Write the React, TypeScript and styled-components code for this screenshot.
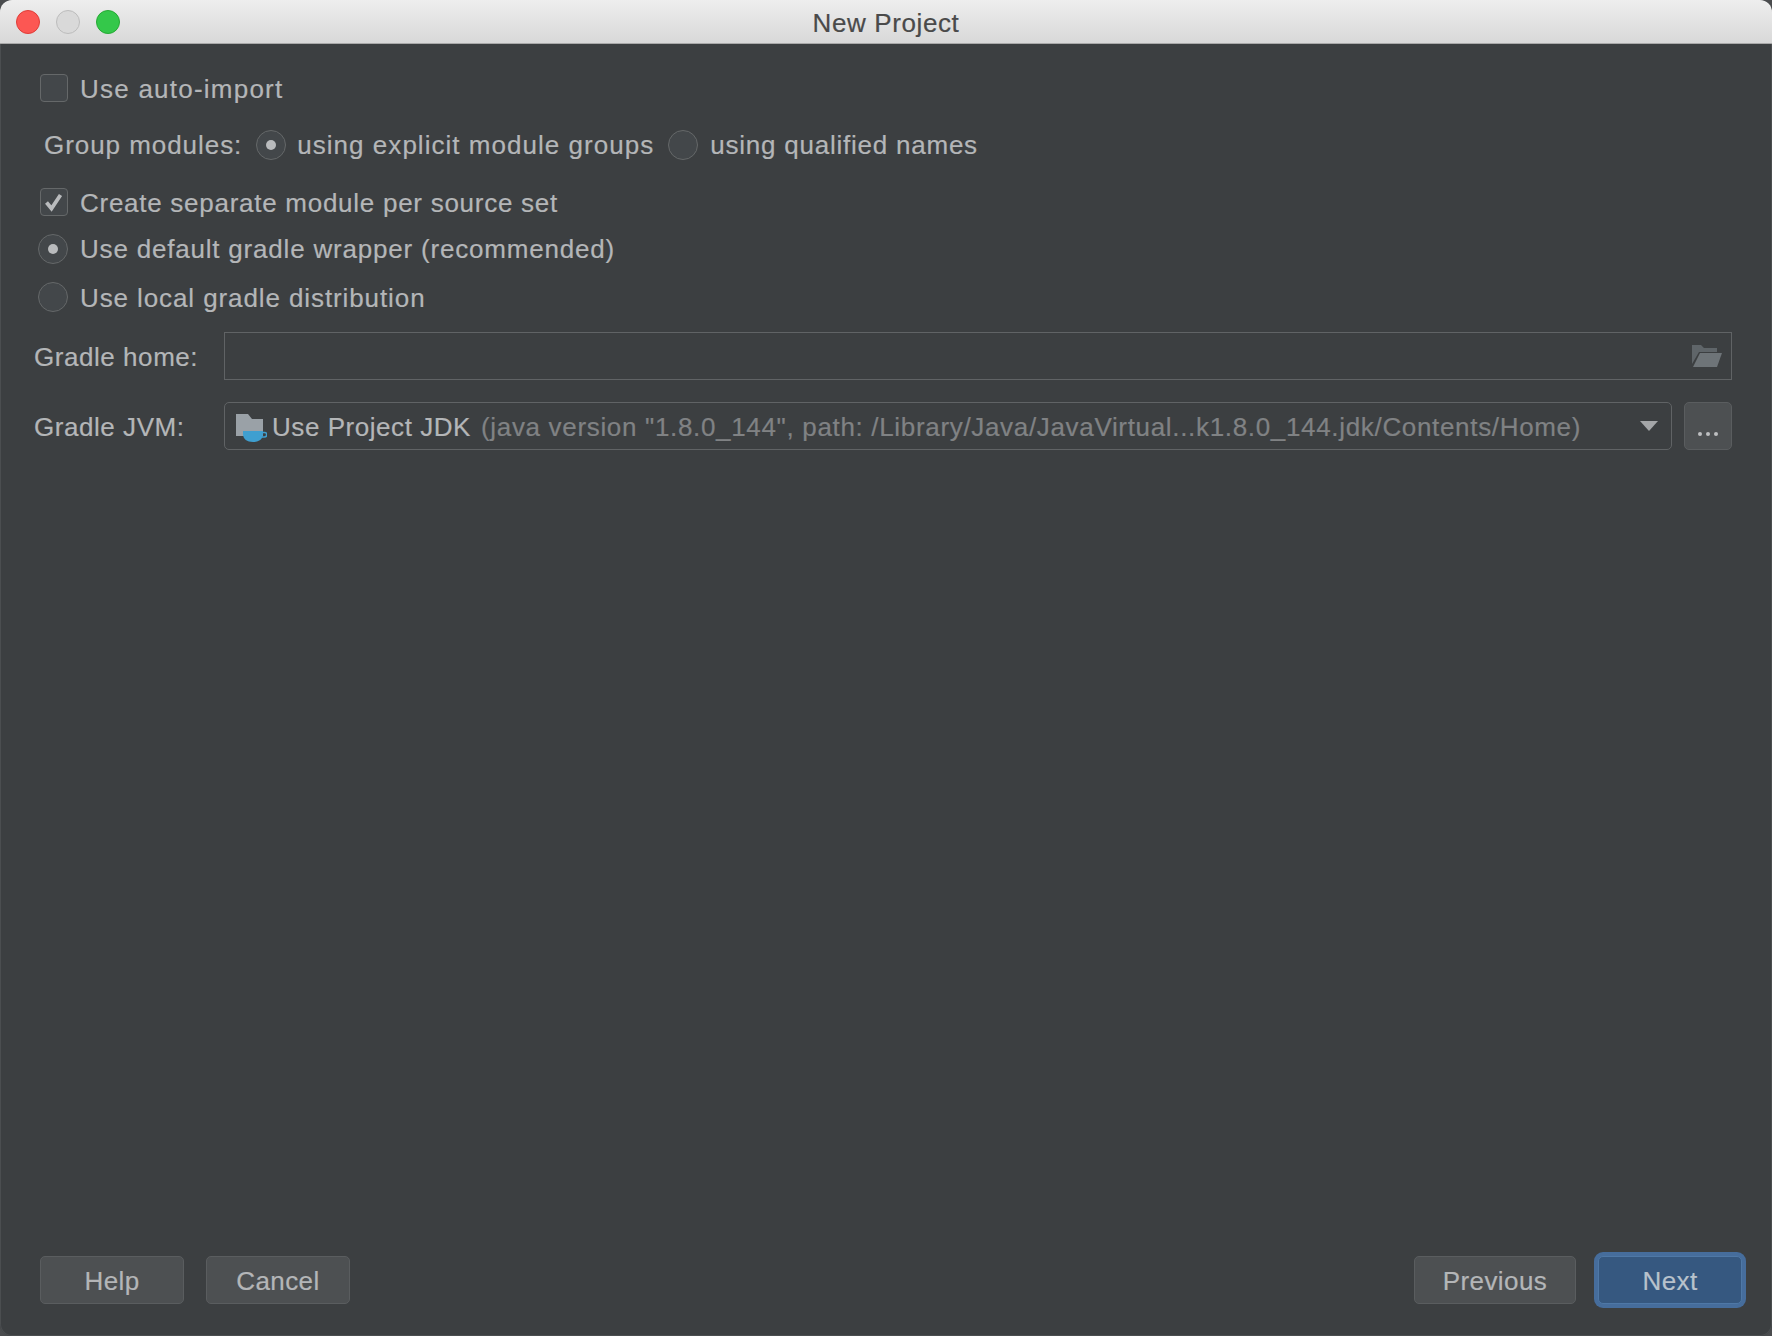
import React from "react";
import styled, { createGlobalStyle } from "styled-components";

const Global = createGlobalStyle`
  html, body { margin: 0; padding: 0; background: #4a4c4e; }
  * { box-sizing: border-box; }
`;

const Window = styled.div`
  width: 1772px;
  height: 1336px;
  display: flex;
  flex-direction: column;
  background: #3c3f41;
  border-radius: 12px;
  overflow: hidden;
  box-shadow: inset 0 0 0 1px #4b4e50;
  font-family: "Liberation Sans", Arial, sans-serif;
  font-size: 26px;
  color: #b4b6b8;
  -webkit-text-stroke: 0.2px currentColor;
`;

const TitleBar = styled.div`
  height: 44px;
  flex: none;
  display: flex;
  align-items: center;
  padding: 0 0 0 16px;
  position: relative;
  background: linear-gradient(#eeeeee, #d8d8d8);
  border-bottom: 1px solid #a9a9a9;
`;

const Lights = styled.div`
  display: flex;
  gap: 16px;
`;

const Light = styled.span<{ $fill: string; $edge: string }>`
  width: 24px;
  height: 24px;
  border-radius: 50%;
  background: ${(p) => p.$fill};
  border: 1px solid ${(p) => p.$edge};
`;

const Title = styled.div`
  position: absolute;
  inset: 0;
  display: flex;
  align-items: center;
  justify-content: center;
  padding-top: 3px;
  color: #4a4a4a;
  font-size: 26px;
  letter-spacing: 0.6px;
`;

const Body = styled.div`
  flex: 1;
  display: flex;
  flex-direction: column;
  padding: 23px 40px 32px 34px;
`;

const Form = styled.div`
  flex: 1;
  display: flex;
  flex-direction: column;
`;

const Row = styled.div<{ $h: number; $indent?: number }>`
  height: ${(p) => p.$h}px;
  flex: none;
  display: flex;
  align-items: center;
  padding-left: ${(p) => p.$indent ?? 0}px;
`;

const Box = styled.span`
  width: 28px;
  height: 28px;
  flex: none;
  margin-right: 12px;
  display: flex;
  align-items: center;
  justify-content: center;
  background: #43474a;
  border: 1.5px solid #656869;
  border-radius: 4px;
`;

const Radio = styled.span<{ $ml?: number; $mr?: number }>`
  width: 30px;
  height: 30px;
  flex: none;
  margin-left: ${(p) => p.$ml ?? 0}px;
  margin-right: ${(p) => p.$mr ?? 12}px;
  display: flex;
  align-items: center;
  justify-content: center;
  background: #43474a;
  border: 1.5px solid #656869;
  border-radius: 50%;
`;

const Dot = styled.span`
  width: 10px;
  height: 10px;
  border-radius: 50%;
  background: #b9bbbd;
`;

const Text = styled.span<{ $sp?: number }>`
  padding-top: 2px;
  white-space: nowrap;
  letter-spacing: ${(p) => p.$sp ?? 0.55}px;
`;

const FieldLabel = styled(Text)`
  width: 190px;
  flex: none;
`;

const PathField = styled.div`
  flex: 1;
  height: 48px;
  display: flex;
  align-items: center;
  justify-content: flex-end;
  padding-right: 9px;
  border: 1.5px solid #606365;
`;

const Combo = styled.div`
  flex: 1;
  height: 48px;
  display: flex;
  align-items: center;
  padding: 0 13px 0 10px;
  border: 1.5px solid #606365;
  border-radius: 5px;
`;

const JdkName = styled(Text)`
  margin-left: 5px;
`;

const JdkPath = styled(Text)`
  flex: 1;
  margin-left: 10px;
  color: #808284;
  letter-spacing: 0.67px;
`;

const BrowseButton = styled.div`
  width: 48px;
  height: 48px;
  flex: none;
  margin-left: 12px;
  display: flex;
  align-items: center;
  justify-content: center;
  gap: 4px;
  padding-top: 15px;
  background: #4d5052;
  border: 1.5px solid #5a5d5f;
  border-radius: 5px;
`;

const BrowseDot = styled.span`
  width: 4px;
  height: 4px;
  border-radius: 50%;
  background: #bdbfc1;
`;

const Footer = styled.div`
  display: flex;
  align-items: center;
  padding-left: 6px;
`;

const Spacer = styled.div`
  flex: 1;
`;

const Button = styled.div<{ $w: number; $ml?: number }>`
  width: ${(p) => p.$w}px;
  height: 48px;
  margin-left: ${(p) => p.$ml ?? 0}px;
  padding-top: 2px;
  display: flex;
  align-items: center;
  justify-content: center;
  background: #4d5052;
  border: 1.5px solid #5a5d5f;
  border-radius: 5px;
  letter-spacing: 0.4px;
`;

const PrimaryButton = styled(Button)`
  margin-right: -10px;
  background: #365880;
  border: 1.5px solid #4f78a6;
  box-shadow: 0 0 0 4px #466d9c;
  color: #b8c2cc;
`;

const FolderOpen = () => (
  <svg width="30" height="24" viewBox="0 0 30 24">
    <path d="M0 1h9l3 3h13v4H7L0 20z" fill="#5f6569" />
    <path d="M8 9h22l-5 14H1z" fill="#6e7478" />
  </svg>
);

const JdkIcon = () => (
  <svg width="32" height="32" viewBox="0 0 32 32">
    <path d="M1 4h12l4 5h11v17H1z" fill="#9aa1a7" />
    <path d="M8 21h20v3c0 5-4 8-10 8S8 29 8 24z" fill="#3f9fd0" />
    <path d="M28 22.500h1.500a2 2 0 0 1 0 4.500H26" fill="none" stroke="#3f9fd0" strokeWidth="1.600" />
  </svg>
);

const Check = () => (
  <svg width="22" height="22" viewBox="0 0 22 22">
    <path d="M3.500 11.500l5 6L17.500 4" fill="none" stroke="#b9bbbd" strokeWidth="3.800" />
  </svg>
);

const Arrow = () => (
  <svg width="18" height="10" viewBox="0 0 18 10">
    <path d="M0 0h18L9 10z" fill="#a4a6a8" />
  </svg>
);

export default function App() {
  return (
    <>
      <Global />
      <Window>
        <TitleBar>
          <Lights>
            <Light $fill="#fc5753" $edge="#df3d38" />
            <Light $fill="#d9d9d9" $edge="#bcbcbc" />
            <Light $fill="#34c84a" $edge="#26a934" />
          </Lights>
          <Title>New Project</Title>
        </TitleBar>
        <Body>
          <Form>
            <Row $h={42} $indent={6}>
              <Box />
              <Text $sp={1.23}>Use auto-import</Text>
            </Row>
            <Row $h={71} $indent={10}>
              <Text $sp={0.95}>Group modules:</Text>
              <Radio $ml={14} $mr={11}><Dot /></Radio>
              <Text $sp={1.03}>using explicit module groups</Text>
              <Radio $ml={14} />
              <Text $sp={0.77}>using qualified names</Text>
            </Row>
            <Row $h={44} $indent={6}>
              <Box><Check /></Box>
              <Text $sp={0.73}>Create separate module per source set</Text>
            </Row>
            <Row $h={49} $indent={4}>
              <Radio><Dot /></Radio>
              <Text $sp={0.8}>Use default gradle wrapper (recommended)</Text>
            </Row>
            <Row $h={48} $indent={4}>
              <Radio />
              <Text $sp={0.9}>Use local gradle distribution</Text>
            </Row>
            <Row $h={70}>
              <FieldLabel>Gradle home:</FieldLabel>
              <PathField><FolderOpen /></PathField>
            </Row>
            <Row $h={70}>
              <FieldLabel>Gradle JVM:</FieldLabel>
              <Combo>
                <JdkIcon />
                <JdkName>Use Project JDK</JdkName>
                <JdkPath>(java version "1.8.0_144", path: /Library/Java/JavaVirtual...k1.8.0_144.jdk/Contents/Home)</JdkPath>
                <Arrow />
              </Combo>
              <BrowseButton aria-label="...">
                <BrowseDot />
                <BrowseDot />
                <BrowseDot />
              </BrowseButton>
            </Row>
          </Form>
          <Footer>
            <Button $w={144}>Help</Button>
            <Button $w={144} $ml={22}>Cancel</Button>
            <Spacer />
            <Button $w={162}>Previous</Button>
            <PrimaryButton $w={144} $ml={22}>Next</PrimaryButton>
          </Footer>
        </Body>
      </Window>
    </>
  );
}
